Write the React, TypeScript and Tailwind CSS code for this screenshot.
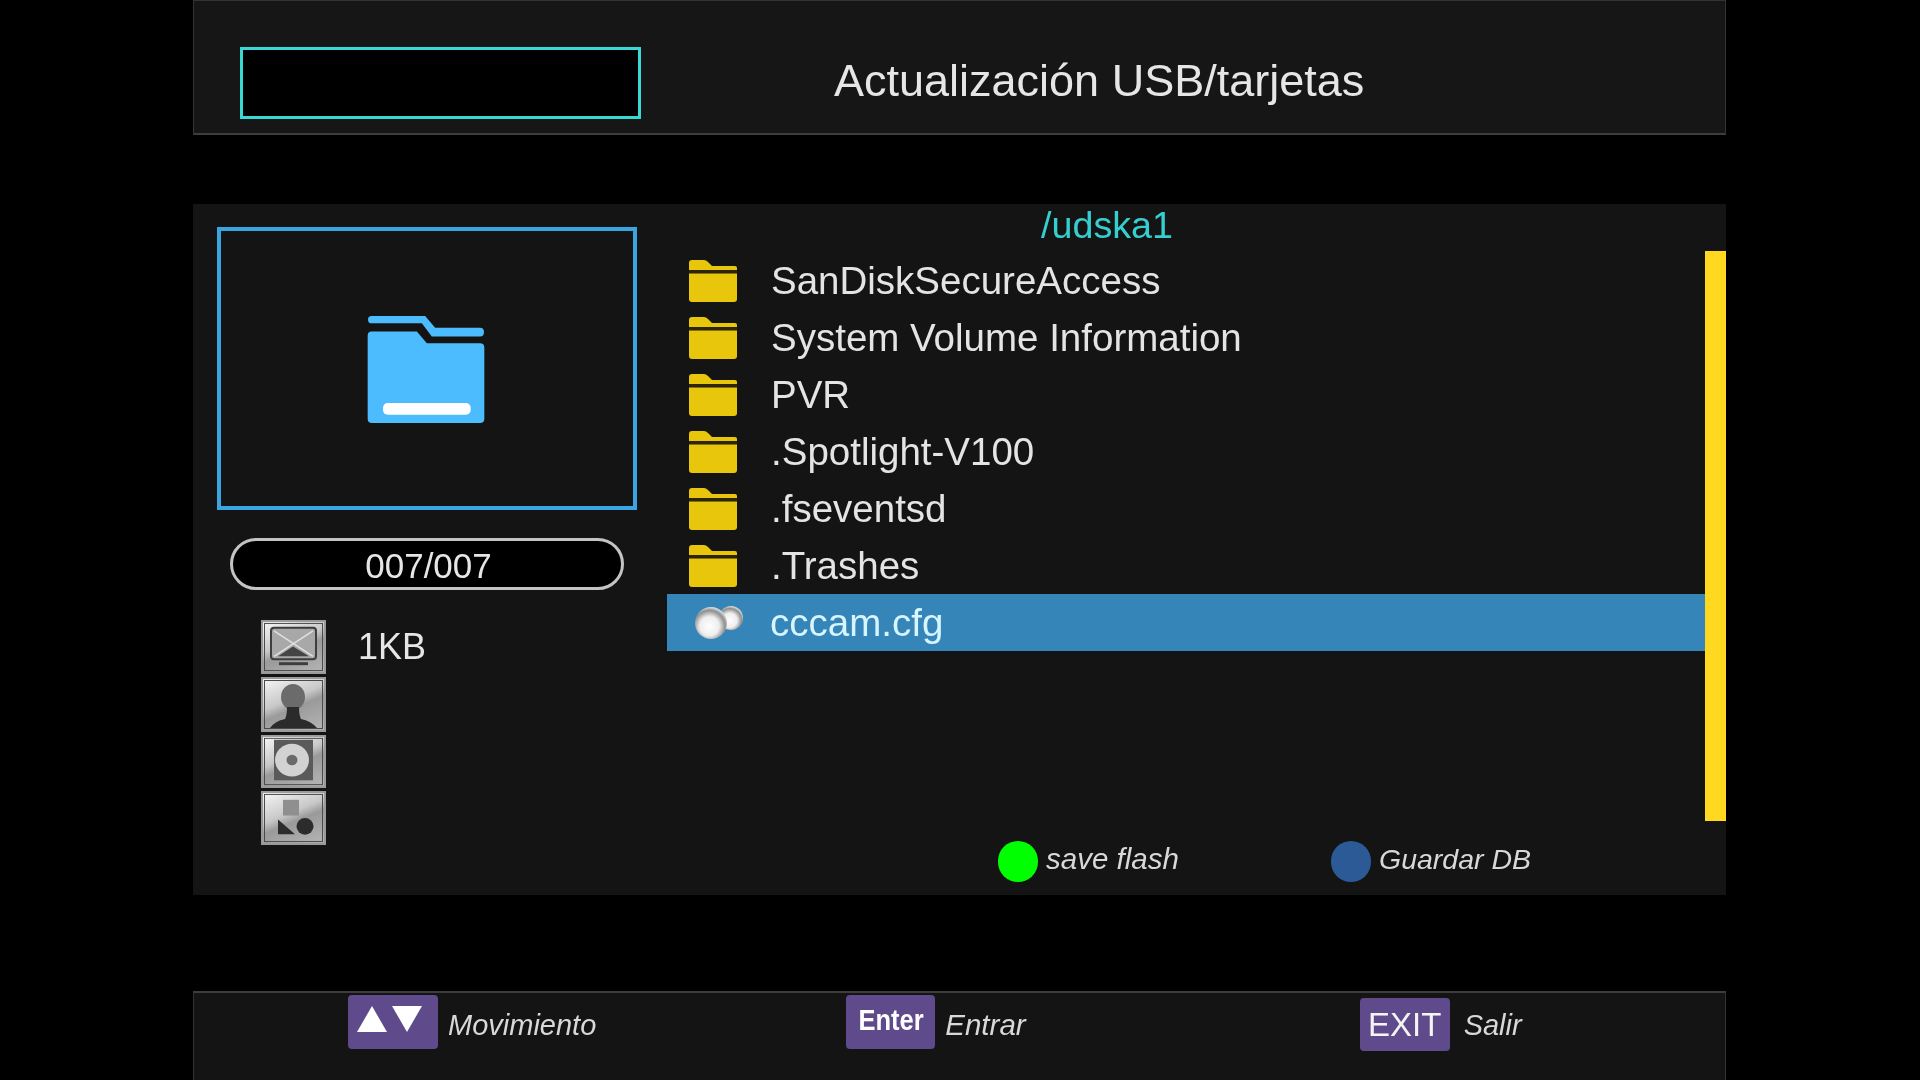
import React from "react";

const FolderSmall = () => (
  <svg width="48" height="42" viewBox="0 0 48 42" className="shrink-0">
    <path d="M0 3 Q0 0 3 0 H15 Q17 0 19 2 L23 6 H46 Q48 6 48 8 V10 H0 Z" fill="#e8c60c" />
    <path d="M0 10 H48 V13.5 H0 Z" fill="#2e2504" />
    <path d="M0 13.5 H48 V39 Q48 42 45 42 H3 Q0 42 0 39 Z" fill="#e8c60c" />
  </svg>
);

const FolderBig = () => (
  <svg width="118" height="109" viewBox="0 0 355 328">
    <path d="M14 3 H175 L205 38 H340 Q352 38 352 51 Q352 65 340 65 H195 L165 25 H14 Q3 25 3 14 Q3 3 14 3 Z" fill="#4dbcff" />
    <path d="M14 50 H150 L180 85 H340 Q353 85 353 98 V312 Q353 325 340 325 H15 Q2 325 2 312 V62 Q2 50 14 50 Z" fill="#4dbcff" />
    <rect x="48" y="265" width="264" height="35" rx="14" fill="#ffffff" />
  </svg>
);

const Spheres = () => (
  <svg width="50" height="36" viewBox="0 0 50 36" className="shrink-0">
    <defs>
      <radialGradient id="sph" cx="0.45" cy="0.6" r="0.6">
        <stop offset="0" stopColor="#ffffff" />
        <stop offset="0.5" stopColor="#eeeeee" />
        <stop offset="0.82" stopColor="#8f8f8f" />
        <stop offset="1" stopColor="#e0e0e0" />
      </radialGradient>
    </defs>
    <circle cx="37" cy="13" r="12" fill="url(#sph)" />
    <circle cx="17" cy="18" r="16" fill="url(#sph)" />
  </svg>
);

const Tile = ({ children, h }: { children: React.ReactNode; h: string }) => (
  <svg width="65" viewBox="0 0 65 55" preserveAspectRatio="none" className={h}>
    <defs>
      <linearGradient id="tile" x1="0.2" y1="0" x2="0.7" y2="1">
        <stop offset="0" stopColor="#f0f0f0" />
        <stop offset="0.42" stopColor="#c8c8c8" />
        <stop offset="0.58" stopColor="#9a9a9a" />
        <stop offset="1" stopColor="#b0b0b0" />
      </linearGradient>
    </defs>
    <rect x="1" y="1" width="63" height="53" fill="url(#tile)" stroke="#9a9a9a" strokeWidth="2" />
    <rect x="3.5" y="3.5" width="58" height="48" fill="none" stroke="#4a4a4a" strokeWidth="1" />
    {children}
  </svg>
);

const Row = ({ name }: { name: string }) => (
  <div className="h-[57px] flex items-center pl-[22px] text-[38.5px] text-[#e4e4e4]">
    <FolderSmall />
    <span className="ml-[34px]">{name}</span>
  </div>
);

const Legend = ({ color, label, width, size }: { color: string; label: string; width: string; size: string }) => (
  <div className={`flex items-center ${width}`}>
    <div className={`w-[40px] h-[41px] rounded-full ${color}`} />
    <span className={`ml-[8px] -mt-[4px] italic text-[#d8d8d8] ${size}`}>{label}</span>
  </div>
);

export default function App() {
  return (
    <div className="w-[1920px] h-[1080px] bg-black overflow-hidden pl-[193px] pr-[194px] flex flex-col font-['Liberation_Sans',sans-serif] blur-[0.5px]">
      <header className="h-[135px] shrink-0 bg-[#161616] border border-t-[#333333] border-l-[#333333] border-r-[#333333] border-b-[#3d3d3d] border-b-2 flex items-center">
        <div className="ml-[46px] mt-[31px] w-[401px] h-[72px] bg-black border-[3px] border-[#38d8d4]" />
        <h1 className="ml-[193px] mt-[28px] text-[45px] font-normal text-[#e6e6e6]">Actualización USB/tarjetas</h1>
      </header>

      <main className="mt-[69px] h-[691px] shrink-0 bg-[#141414] flex">
        <aside className="w-[474px] shrink-0 pl-[24px] pt-[23px] flex flex-col">
          <div className="w-[420px] h-[283px] border-[4px] border-[#3ba5e2] flex items-center justify-center">
            <div className="pt-[2px] -ml-[2px]"><FolderBig /></div>
          </div>
          <div className="ml-[13px] mt-[28px] w-[394px] h-[52px] rounded-full bg-black border-[3px] border-[#c4c4c4] flex items-center justify-center text-[35px] text-[#e6e6e6] pt-[4px] pl-[3px]">
            007/007
          </div>
          <div className="flex mt-[30px] ml-[44px]">
            <div className="flex flex-col gap-[3px]">
              <Tile h="h-[54px]">
                <rect x="10" y="8" width="45" height="32" rx="3" fill="#a8a8a8" stroke="#3d3d3d" strokeWidth="2" />
                <path d="M13 11 L52 37 M52 11 L13 37" stroke="#e0e0e0" strokeWidth="1.5" />
                <path d="M17 37 L32 27 L48 37 Z" fill="#444444" />
                <rect x="18" y="43" width="29" height="3" fill="#3d3d3d" />
              </Tile>
              <Tile h="h-[55px]">
                <ellipse cx="32" cy="20" rx="12" ry="13" fill="#6b6b6b" />
                <path d="M9 51 Q14 44 24 42 Q26 38 26 30 H38 Q38 38 40 42 Q50 44 56 51 Z" fill="#2b2b2b" />
              </Tile>
              <Tile h="h-[53px]">
                <rect x="13" y="5" width="39" height="42" fill="#5a5a5a" />
                <circle cx="31" cy="26" r="17" fill="#d2d2d2" />
                <circle cx="31" cy="26" r="5.5" fill="#6a6a6a" />
              </Tile>
              <Tile h="h-[54px]">
                <rect x="22" y="9" width="16" height="16" fill="#8f8f8f" />
                <path d="M17 29 L34 44 H17 Z" fill="#2c2c2c" />
                <circle cx="44" cy="36" r="8.5" fill="#2c2c2c" />
              </Tile>
            </div>
            <span className="ml-[32px] text-[36px] text-[#e6e6e6]">1KB</span>
          </div>
        </aside>

        <section className="flex-1 min-w-0 flex flex-col">
          <div className="h-[48px] flex items-center pl-[374px] pb-[6px] text-[37.7px] text-[#35cfcf]">/udska1</div>
          <Row name="SanDiskSecureAccess" />
          <Row name="System Volume Information" />
          <Row name="PVR" />
          <Row name=".Spotlight-V100" />
          <Row name=".fseventsd" />
          <Row name=".Trashes" />
          <div className="h-[57px] flex items-center pl-[27px] bg-[#3585b9] text-[38.5px] text-[#d6f5ff]">
            <Spheres />
            <span className="ml-[26px]">cccam.cfg</span>
          </div>
          <div className="flex pl-[331px] mt-[190px]">
            <Legend color="bg-[#00ff00]" label="save flash" width="w-[333px]" size="text-[29.5px]" />
            <Legend color="bg-[#2c5a96]" label="Guardar DB" width="w-[300px]" size="text-[28.5px]" />
          </div>
        </section>

        <div className="w-[21px] shrink-0 mt-[47px] h-[570px] bg-[#ffd820]" />
      </main>

      <footer className="mt-[96px] flex-1 bg-[#141414] border-t-2 border-t-[#3d3d3d] border-l border-r border-l-[#333333] border-r-[#333333] flex items-start pl-[154px] pt-[2px]">
        <div className="w-[90px] h-[54px] rounded-[4px] bg-[#5f4a8b] flex items-start gap-[5px] pl-[9px] pt-[11px]">
          <svg width="30" height="26" viewBox="0 0 30 26"><path d="M15 0 L30 26 H0 Z" fill="#fff" /></svg>
          <svg width="30" height="26" viewBox="0 0 30 26"><path d="M0 0 H30 L15 26 Z" fill="#fff" /></svg>
        </div>
        <span className="ml-[10px] mt-[9px] italic text-[29px] text-[#d8d8d8]">Movimiento</span>
        <div className="ml-[250px] w-[89px] h-[54px] rounded-[4px] bg-[#5f4a8b] flex items-center justify-center text-[29px] font-bold text-white pb-[2px]">
          <span className="scale-x-[0.88]">Enter</span>
        </div>
        <span className="ml-[10px] mt-[8px] italic text-[29.5px] text-[#d8d8d8]">Entrar</span>
        <div className="ml-[334px] mt-[3px] w-[90px] h-[53px] rounded-[4px] bg-[#5f4a8b] flex items-center justify-center text-[33px] text-[#f4f4f4]">EXIT</div>
        <span className="ml-[14px] mt-[9px] italic text-[29px] text-[#d8d8d8]">Salir</span>
      </footer>
    </div>
  );
}
